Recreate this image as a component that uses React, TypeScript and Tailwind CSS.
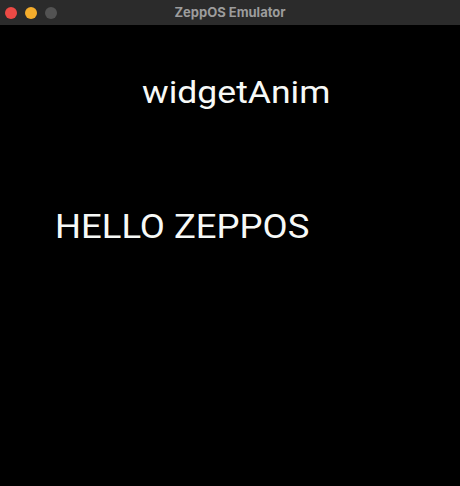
import React from "react";

export default function App() {
  return (
    <div className="w-[460px] h-[486px] bg-black flex flex-col overflow-hidden" style={{ fontFamily: "Roboto, sans-serif" }}>
      <div className="h-[25px] bg-[#2b2b2b] flex items-center relative shrink-0">
        <div className="flex items-center gap-[8px] pl-[5px] pt-[1px]">
          <div className="w-[12px] h-[12px] rounded-full bg-[#ec4a45]" />
          <div className="w-[12px] h-[12px] rounded-full bg-[#f5ad2c]" />
          <div className="w-[12px] h-[12px] rounded-full bg-[#535353]" />
        </div>
        <div className="absolute inset-0 flex items-center justify-center text-[13px] font-bold text-[#9c9c9c]" style={{ fontFamily: "Inter, sans-serif" }}>
          ZeppOS Emulator
        </div>
      </div>
      <div className="flex-1 flex flex-col items-start">
        <div className="pt-[49px] pl-[142px]">
          <div className="w-fit text-[32px] leading-[36px] text-[#f7f9f7] origin-left scale-x-[1.11] whitespace-nowrap">widgetAnim</div>
        </div>
        <div className="pt-[97px] pl-[55px]">
          <div className="w-fit text-[33px] leading-[40px] text-[#f7f9f7] origin-left scale-x-[1.105] whitespace-nowrap">HELLO ZEPPOS</div>
        </div>
      </div>
    </div>
  );
}
